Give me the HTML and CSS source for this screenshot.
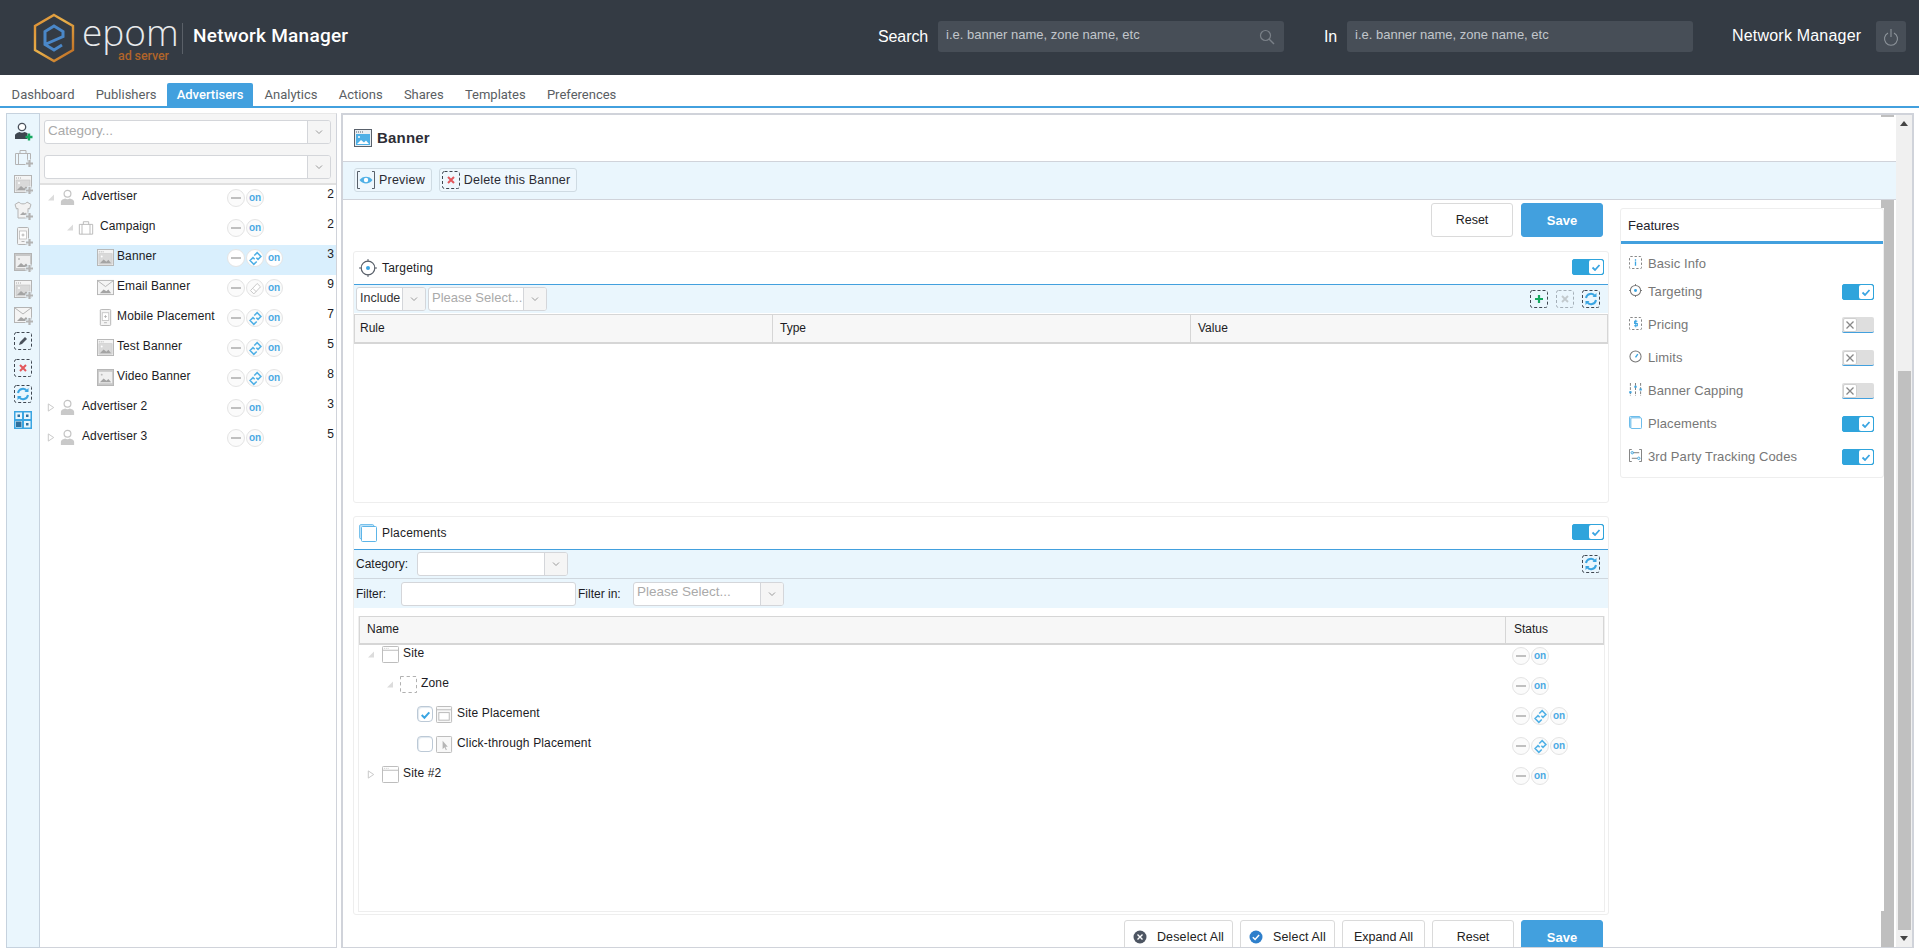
FILE: index.html
```html
<!DOCTYPE html>
<html lang="en">
<head>
<meta charset="utf-8">
<title>Epom Network Manager</title>
<link rel="stylesheet" href="styles.css">
</head>
<body>
<svg class="defs" width="0" height="0" aria-hidden="true">
  <defs>
    <linearGradient id="hexg" x1="0" y1="0" x2="1" y2="1">
      <stop offset="0" stop-color="#d98a32"/><stop offset=".45" stop-color="#e9b04a"/><stop offset="1" stop-color="#b9651f"/>
    </linearGradient>
    <symbol id="i-user" viewBox="0 0 18 18"><circle cx="9" cy="5" r="3.6" fill="#fff" stroke="#c4c4c4" stroke-width="1.3"/><path d="M2 17v-3.5c0-2 3-3 4.5-3.500 1.500 1 3.500 1 5 0 1.500.5 4.500 1.500 4.500 3.500V17z" fill="#c9c9c9"/></symbol>
    <symbol id="i-case" viewBox="0 0 18 18"><path d="M1.500 5.500h15v11h-15zM6 5.500V2.500h6v3M4.500 5.500v11M13.500 5.500v11" fill="none" stroke="#b4b4b4" stroke-width="1"/></symbol>
    <symbol id="i-banner" viewBox="0 0 18 18"><rect x=".5" y=".5" width="17" height="17" fill="#f4f4f4" stroke="#b4b4b4"/><rect x="2" y="5" width="14" height="11" fill="#d9d9d9" stroke="#c4c4c4" stroke-width=".6"/><path d="M2 3h1M4 3h1M6 3h1" stroke="#aaa"/><path d="M3 15l4-4 3 2.500 2-2 3 3.500z" fill="#a4a4a4"/><circle cx="5" cy="8" r="1" fill="#fff"/></symbol>
    <symbol id="i-mail" viewBox="0 0 18 18"><rect x=".5" y="1.500" width="17" height="15" fill="#f4f4f4" stroke="#b4b4b4"/><path d="M1 2l8 6 8-6" fill="none" stroke="#b4b4b4"/><path d="M3 15l4-4 3 2 2-2 3 4z" fill="#a4a4a4"/></symbol>
    <symbol id="i-mobile" viewBox="0 0 18 18"><rect x="3.500" y=".5" width="11" height="17" rx="1" fill="#f4f4f4" stroke="#b4b4b4"/><rect x="5.500" y="4" width="7" height="8" fill="#fff" stroke="#b4b4b4" stroke-width=".7"/><path d="M9 6.500v3M7.500 8h3" stroke="#aaa" stroke-width=".8"/><path d="M7.500 14.500h3" stroke="#b4b4b4"/></symbol>
    <symbol id="i-video" viewBox="0 0 18 18"><rect x=".5" y=".5" width="17" height="17" fill="#c8c8c8" stroke="#b4b4b4"/><rect x="2" y="3" width="14" height="12" fill="#efefef"/><path d="M3 14l4-4 3 2.500 2-2 3 3.500z" fill="#a4a4a4"/><circle cx="5" cy="6" r="1" fill="#bbb"/></symbol>
    <symbol id="i-shirt" viewBox="0 0 18 18"><path d="M5 1L1 3.500l1.500 4.500 1.500-.5V17h10V7.500l1.500.5L17 3.500 13 1c-1 2.500-7 2.500-8 0z" fill="#f2f2f2" stroke="#b4b4b4"/><path d="M6 14l3-3 2 1.500 1-1 1 2.500z" fill="#a8a8a8"/></symbol>
    <symbol id="i-plus" viewBox="0 0 20 20"><path d="M15.500 11.500v8M11.500 15.500h8" stroke="#eaf6fd" stroke-width="4"/><path d="M15.500 12v7M12 15.500h7" stroke="#b4b4b4" stroke-width="2.200"/></symbol>
    <symbol id="i-site" viewBox="0 0 18 18"><rect x=".5" y=".5" width="17" height="17" rx="1" fill="#fff" stroke="#b8b8b8"/><path d="M1 4.500h16" stroke="#b8b8b8"/><path d="M2 2.500h1M4 2.500h1M6 2.500h1" stroke="#c8c8c8"/></symbol>
    <symbol id="i-zone" viewBox="0 0 18 18"><rect x=".5" y=".5" width="17" height="17" fill="#fff" stroke="#aaa" stroke-dasharray="3.500 3"/></symbol>
    <symbol id="i-placement" viewBox="0 0 18 18"><rect x=".5" y=".5" width="16" height="17" rx="1" fill="#f8f8f8" stroke="#b8b8b8"/><path d="M1 4h15" stroke="#b8b8b8"/><rect x="3" y="7" width="11" height="8" fill="#fff" stroke="#b8b8b8"/></symbol>
    <symbol id="i-click" viewBox="0 0 18 18"><rect x=".5" y=".5" width="16" height="17" rx="1" fill="#f8f8f8" stroke="#b8b8b8"/><path d="M7 5v9l2-2 1.500 3 1-.5L10 11.500h2.500z" fill="#b5b5b5"/></symbol>
    <symbol id="i-link" viewBox="0 0 18 18"><path d="M7.500 5.500L11 2l4.500 4.500-3.500 3.500-2-2M10.500 12.500L7 16l-4.500-4.500L6 8l2 2" fill="none" stroke="#4fb0e6" stroke-width="1.800"/></symbol>
    <symbol id="i-linkoff" viewBox="0 0 18 18"><path d="M3 11.500L11 3l4 4-8 8.500zM6 9l4 4" fill="#fff" stroke="#c8c8c8" stroke-width="1.200"/></symbol>
    <symbol id="i-dash" viewBox="0 0 18 18"><rect x=".5" y=".5" width="17" height="17" rx="2" fill="none" stroke="#3e4650" stroke-dasharray="3 2"/></symbol>
    <symbol id="i-refresh" viewBox="0 0 18 18"><rect x=".5" y=".5" width="17" height="17" rx="2" fill="none" stroke="#3e4650" stroke-dasharray="3 2"/><path d="M4 8a5 5 0 0 1 9-2M14 10a5 5 0 0 1-9 2" fill="none" stroke="#3aa5e2" stroke-width="2"/><path d="M14.500 3v4h-4zM3.500 15v-4h4z" fill="#3aa5e2"/></symbol>
    <symbol id="i-x" viewBox="0 0 18 18"><rect x=".5" y=".5" width="17" height="17" rx="2" fill="none" stroke="#3e4650" stroke-dasharray="3 2"/><path d="M6 6l6 6M12 6l-6 6" stroke="#e2575c" stroke-width="2"/></symbol>
    <symbol id="i-edit" viewBox="0 0 18 18"><rect x=".5" y=".5" width="17" height="17" rx="2" fill="none" stroke="#3e4650" stroke-dasharray="3 2"/><path d="M5 13l1-3 5-5 2 2-5 5z" fill="#4b525c"/></symbol>
    <symbol id="i-grid" viewBox="0 0 18 18"><rect width="18" height="18" fill="#3aa5e2"/><path d="M1.500 1.500h6.500v6.500H1.500zM10 1.500h6.500v6.500H10zM1.500 10h6.500v6.500H1.500zM10 10h6.500v6.500H10z" fill="#e8f5fc"/><path d="M3.500 3.500h2.500v2.500H3.500zM12 3.500h2.500v2.500H12zM2 10.500h5.500V16H2zM12 12h2.500v2.500H12z" fill="#2e6f9c"/></symbol>
    <symbol id="i-target" viewBox="0 0 18 18"><circle cx="9" cy="9" r="6.800" fill="none" stroke="#5a616b" stroke-width="1.200"/><circle cx="9" cy="9" r="2" fill="#3aa5e2"/><path d="M9 0v3M9 15v3M0 9h3M15 9h3" stroke="#5a616b"/></symbol>
    <symbol id="i-places" viewBox="0 0 18 18"><rect x=".7" y=".7" width="14" height="14" rx="1" fill="#d5ecfa" stroke="#5db5e8"/><rect x="2.500" y="2.500" width="15" height="15" rx="1" fill="#fff" stroke="#5db5e8"/></symbol>
    <symbol id="i-f-info" viewBox="0 0 14 14"><rect x=".5" y=".5" width="13" height="13" rx="1" fill="none" stroke="#777" stroke-dasharray="2.500 2"/><path d="M7 3.500v1.500M7 6v4.500" stroke="#3aa5e2" stroke-width="1.400"/></symbol>
    <symbol id="i-f-target" viewBox="0 0 14 14"><circle cx="7" cy="7" r="5.500" fill="none" stroke="#777" stroke-width="1.100"/><circle cx="7" cy="7" r="1.600" fill="#3aa5e2"/><path d="M7 0v2M7 12v2M0 7h2M12 7h2" stroke="#777"/></symbol>
    <symbol id="i-f-price" viewBox="0 0 14 14"><rect x=".5" y=".5" width="13" height="13" rx="1" fill="none" stroke="#777" stroke-dasharray="2.500 2"/><path d="M9 4.500H6v2.500h3v2.500H5.500M7.300 3v8" fill="none" stroke="#3aa5e2" stroke-width="1.100"/></symbol>
    <symbol id="i-f-clock" viewBox="0 0 14 14"><circle cx="7" cy="7" r="6" fill="none" stroke="#777" stroke-width="1.100"/><path d="M7 8l2.500-3.500" stroke="#3aa5e2" stroke-width="1.500"/></symbol>
    <symbol id="i-f-cap" viewBox="0 0 14 14"><path d="M1.500 0v14M7 0v14M12.500 0v14" stroke="#777" stroke-dasharray="3 1.500"/><path d="M1.500 9v2M7 3v2M12.500 6v2" stroke="#3aa5e2" stroke-width="2.500"/></symbol>
    <symbol id="i-f-places" viewBox="0 0 14 14"><rect x=".5" y=".5" width="11.500" height="12" rx="1" fill="#cfe9f9" stroke="#5db5e8"/><rect x="2" y="2" width="11.500" height="11.500" rx="1" fill="#fff" stroke="#5db5e8"/></symbol>
    <symbol id="i-f-track" viewBox="0 0 14 14"><path d="M3 .5H.5v13H3M11 .5h2.500v13H11" fill="none" stroke="#777"/><path d="M4 4h7M3 10h6" stroke="#777"/><circle cx="3.500" cy="4" r="1.300" fill="none" stroke="#3aa5e2"/><circle cx="10.500" cy="10" r="1.300" fill="none" stroke="#3aa5e2"/></symbol>
    <symbol id="i-check" viewBox="0 0 12 12"><path d="M2.500 6.500l2.500 2.500 4.500-5" fill="none" stroke="#3aa5e2" stroke-width="1.800"/></symbol>
    <symbol id="i-off" viewBox="0 0 12 12"><path d="M2.500 2.500l7 7M9.500 2.500l-7 7" stroke="#888" stroke-width="1.300"/></symbol>
    <symbol id="i-chev" viewBox="0 0 10 6"><path d="M2 1.500l3 3 3-3" fill="none" stroke="#999" stroke-width="1"/></symbol>
    <symbol id="i-open" viewBox="0 0 8 8"><path d="M7 1v6H1z" fill="#dcdcdc"/></symbol>
    <symbol id="i-closed" viewBox="0 0 8 10"><path d="M1 1l6 4-6 4z" fill="#fff" stroke="#c4c4c4"/></symbol>
  </defs>
</svg>

<header class="topbar">
  <div class="brand">
    <svg class="hex" viewBox="0 0 44 50">
      <path d="M22 2l19 11v24L22 48 3 37V13z" fill="none" stroke="url(#hexg)" stroke-width="2.400"/>
      <path d="M30 32l-8 5-9-5.500v-13l9-5.500 9 5.500v5L14 31" fill="none" stroke="#4a87c8" stroke-width="3"/>
    </svg>
    <div class="wordmark"><span class="epom">epom</span><span class="adserver">ad server</span></div>
    <div class="brand-title">Network Manager</div>
  </div>
  <div class="searches">
    <label class="sr-label">Search</label>
    <div class="sr-box w-search"><span>i.e. banner name, zone name, etc</span>
      <svg class="sr-ico" viewBox="0 0 16 16"><circle cx="6.500" cy="6.500" r="5" fill="none" stroke="#7a8088" stroke-width="1.200"/><path d="M10 10l5 5" stroke="#7a8088" stroke-width="1.400"/></svg>
    </div>
    <label class="sr-label in">In</label>
    <div class="sr-box"><span>i.e. banner name, zone name, etc</span></div>
    <div class="sr-label nm">Network Manager</div>
    <div class="power"><svg viewBox="0 0 16 20" width="16" height="20"><path d="M5 6a6.500 6.500 0 1 0 6 0M8 2v8" fill="none" stroke="#8d949b" stroke-width="1.100"/></svg></div>
  </div>
</header>

<nav class="tabs">
  <a class="tab">Dashboard</a><a class="tab">Publishers</a><a class="tab active">Advertisers</a><a class="tab">Analytics</a><a class="tab">Actions</a><a class="tab">Shares</a><a class="tab">Templates</a><a class="tab">Preferences</a>
</nav>

<div class="workspace">
  <aside class="tools">
    <svg class="t-ico" viewBox="0 0 20 20"><circle cx="8" cy="5" r="3.700" fill="#fff" stroke="#4b525c" stroke-width="1.300"/><path d="M1 17v-3.500c0-2 3-3 4.500-3.500 1.500 1 3.500 1 5 0 1 .3 2 .7 3 1.300V17z" fill="#3e4650"/><path d="M15 11.500v7M11.500 15h7" stroke="#16a860" stroke-width="2.400"/></svg>
    <svg class="t-ico" viewBox="0 0 20 20"><use href="#i-case" width="18" height="18"/><use href="#i-plus"/></svg>
    <svg class="t-ico" viewBox="0 0 20 20"><use href="#i-banner" width="18" height="18"/><use href="#i-plus"/></svg>
    <svg class="t-ico" viewBox="0 0 20 20"><use href="#i-shirt" width="18" height="18"/><use href="#i-plus"/></svg>
    <svg class="t-ico" viewBox="0 0 20 20"><use href="#i-mobile" width="18" height="18"/><use href="#i-plus"/></svg>
    <svg class="t-ico" viewBox="0 0 20 20"><use href="#i-video" width="18" height="18"/><use href="#i-plus"/></svg>
    <svg class="t-ico" viewBox="0 0 20 20"><use href="#i-banner" width="18" height="18"/><use href="#i-plus"/></svg>
    <svg class="t-ico" viewBox="0 0 20 20"><use href="#i-mail" width="18" height="18"/><use href="#i-plus"/></svg>
    <svg class="t-ico" viewBox="0 0 20 20"><use href="#i-edit" width="18" height="18"/></svg>
    <svg class="t-ico" viewBox="0 0 20 20"><use href="#i-x" width="18" height="18"/></svg>
    <svg class="t-ico" viewBox="0 0 20 20"><use href="#i-refresh" width="18" height="18"/></svg>
    <svg class="t-ico" viewBox="0 0 20 20"><use href="#i-grid" width="18" height="18"/></svg>
  </aside>

  <section class="treepanel">
    <div class="filters">
      <div class="combo wide"><span class="ph">Category...</span><b class="chev"><svg viewBox="0 0 10 6"><use href="#i-chev"/></svg></b></div>
      <div class="combo wide"><span class="ph"></span><b class="chev"><svg viewBox="0 0 10 6"><use href="#i-chev"/></svg></b></div>
    </div>
    <div class="tree">
      <div class="row lv0"><svg class="arrow"><use href="#i-open"/></svg><svg class="nico"><use href="#i-user"/></svg><span class="lbl">Advertiser</span><div class="ctrls"><i class="cb minus"></i><i class="cb on">on</i></div><span class="num">2</span></div>
      <div class="row lv1"><svg class="arrow"><use href="#i-open"/></svg><svg class="nico"><use href="#i-case"/></svg><span class="lbl">Campaign</span><div class="ctrls"><i class="cb minus"></i><i class="cb on">on</i></div><span class="num">2</span></div>
      <div class="row lv2 sel"><svg class="nico"><use href="#i-banner"/></svg><span class="lbl">Banner</span><div class="ctrls"><i class="cb minus"></i><i class="cb"><svg><use href="#i-link"/></svg></i><i class="cb on">on</i></div><span class="num">3</span></div>
      <div class="row lv2"><svg class="nico"><use href="#i-mail"/></svg><span class="lbl">Email Banner</span><div class="ctrls"><i class="cb minus"></i><i class="cb"><svg><use href="#i-linkoff"/></svg></i><i class="cb on">on</i></div><span class="num">9</span></div>
      <div class="row lv2"><svg class="nico"><use href="#i-mobile"/></svg><span class="lbl sp">Mobile Placement</span><div class="ctrls"><i class="cb minus"></i><i class="cb"><svg><use href="#i-link"/></svg></i><i class="cb on">on</i></div><span class="num">7</span></div>
      <div class="row lv2"><svg class="nico"><use href="#i-banner"/></svg><span class="lbl">Test Banner</span><div class="ctrls"><i class="cb minus"></i><i class="cb"><svg><use href="#i-link"/></svg></i><i class="cb on">on</i></div><span class="num">5</span></div>
      <div class="row lv2"><svg class="nico"><use href="#i-video"/></svg><span class="lbl">Video Banner</span><div class="ctrls"><i class="cb minus"></i><i class="cb"><svg><use href="#i-link"/></svg></i><i class="cb on">on</i></div><span class="num">8</span></div>
      <div class="row lv0"><svg class="arrow"><use href="#i-closed"/></svg><svg class="nico"><use href="#i-user"/></svg><span class="lbl">Advertiser 2</span><div class="ctrls"><i class="cb minus"></i><i class="cb on">on</i></div><span class="num">3</span></div>
      <div class="row lv0"><svg class="arrow"><use href="#i-closed"/></svg><svg class="nico"><use href="#i-user"/></svg><span class="lbl">Advertiser 3</span><div class="ctrls"><i class="cb minus"></i><i class="cb on">on</i></div><span class="num">5</span></div>
    </div>
  </section>

  <main class="mainpanel">
    <div class="content">
      <div class="titlebar">
        <svg class="title-ico" viewBox="0 0 18 18"><rect x=".5" y=".5" width="17" height="17" fill="#e9eef2" stroke="#59616b"/><rect x="2" y="5" width="14" height="11" fill="#4fb0e6"/><path d="M3 15l4-4 3 2.500 2-2 3 3.500z" fill="#fff"/><circle cx="5" cy="8" r="1" fill="#fff"/><path d="M2 3h8" stroke="#59616b" stroke-dasharray="1 1"/></svg>
        <h1>Banner</h1>
      </div>
      <div class="actionbar">
        <button class="act"><svg viewBox="0 0 18 18"><path d="M3 .5H.5v17H3M15 .5h2.500v17H15" fill="none" stroke="#59616b"/><path d="M2.500 9c3-4.500 10-4.500 13 0-3 4.500-10 4.500-13 0z" fill="#4fb0e6"/><circle cx="9" cy="9" r="2.200" fill="#fff"/></svg>Preview</button>
        <button class="act"><svg viewBox="0 0 18 18"><use href="#i-x"/></svg>Delete this Banner</button>
      </div>
      <div class="bodyrow">
        <div class="leftcol">
          <div class="btnrow top">
            <button class="btn">Reset</button><button class="btn save">Save</button>
          </div>

          <section class="card targeting">
            <div class="card-head">
              <svg class="head-ico" viewBox="0 0 18 18"><use href="#i-target"/></svg><span>Targeting</span>
              <span class="toggle onstate"><b></b><em><svg viewBox="0 0 12 12"><use href="#i-check"/></svg></em></span>
            </div>
            <div class="strip">
              <div class="combo small inc"><span>Include</span><b class="chev"><svg viewBox="0 0 10 6"><use href="#i-chev"/></svg></b></div>
              <div class="combo small sel2"><span class="ph">Please Select...</span><b class="chev"><svg viewBox="0 0 10 6"><use href="#i-chev"/></svg></b></div>
              <div class="strip-right">
                <svg class="sicon" viewBox="0 0 18 18"><use href="#i-dash"/><path d="M9 5v8M5 9h8" stroke="#16a860" stroke-width="2.200"/></svg>
                <svg class="sicon dim" viewBox="0 0 18 18"><use href="#i-dash"/><path d="M6 6l6 6M12 6l-6 6" stroke="#888" stroke-width="1.800"/></svg>
                <svg class="sicon" viewBox="0 0 18 18"><use href="#i-refresh"/></svg>
              </div>
            </div>
            <div class="thead three"><span>Rule</span><span>Type</span><span>Value</span></div>
          </section>

          <section class="card placements">
            <div class="card-head">
              <svg class="head-ico" viewBox="0 0 18 18"><use href="#i-places"/></svg><span>Placements</span>
              <span class="toggle onstate"><b></b><em><svg viewBox="0 0 12 12"><use href="#i-check"/></svg></em></span>
            </div>
            <div class="strip firststrip">
              <label class="cat-l">Category:</label>
              <div class="combo small cat"><span></span><b class="chev"><svg viewBox="0 0 10 6"><use href="#i-chev"/></svg></b></div>
              <div class="strip-right"><svg class="sicon" viewBox="0 0 18 18"><use href="#i-refresh"/></svg></div>
            </div>
            <div class="strip second">
              <label class="fil-l">Filter:</label>
              <div class="plain"></div>
              <label class="fin-l">Filter in:</label>
              <div class="combo small cat"><span class="ph">Please Select...</span><b class="chev"><svg viewBox="0 0 10 6"><use href="#i-chev"/></svg></b></div>
            </div>
            <div class="ptable">
              <div class="thead two"><span>Name</span><span>Status</span></div>
              <div class="prow p0"><svg class="arrow"><use href="#i-open"/></svg><svg class="nico"><use href="#i-site"/></svg><span class="lbl">Site</span><div class="ctrls"><i class="cb minus"></i><i class="cb on">on</i></div></div>
              <div class="prow p1"><svg class="arrow"><use href="#i-open"/></svg><svg class="nico"><use href="#i-zone"/></svg><span class="lbl">Zone</span><div class="ctrls"><i class="cb minus"></i><i class="cb on">on</i></div></div>
              <div class="prow p2"><span class="check ticked"><svg viewBox="0 0 12 12"><use href="#i-check"/></svg></span><svg class="nico"><use href="#i-placement"/></svg><span class="lbl">Site Placement</span><div class="ctrls"><i class="cb minus"></i><i class="cb"><svg><use href="#i-link"/></svg></i><i class="cb on">on</i></div></div>
              <div class="prow p2"><span class="check"></span><svg class="nico"><use href="#i-click"/></svg><span class="lbl">Click-through Placement</span><div class="ctrls"><i class="cb minus"></i><i class="cb"><svg><use href="#i-link"/></svg></i><i class="cb on">on</i></div></div>
              <div class="prow p0"><svg class="arrow"><use href="#i-closed"/></svg><svg class="nico"><use href="#i-site"/></svg><span class="lbl">Site #2</span><div class="ctrls"><i class="cb minus"></i><i class="cb on">on</i></div></div>
            </div>
          </section>

          <div class="btnrow bottom">
            <button class="btn ic"><svg viewBox="0 0 14 14"><circle cx="7" cy="7" r="6.500" fill="#4d5562"/><path d="M4.500 4.500l5 5M9.500 4.500l-5 5" stroke="#fff" stroke-width="1.400"/></svg>Deselect All</button>
            <button class="btn ic"><svg viewBox="0 0 14 14"><circle cx="7" cy="7" r="6.500" fill="#2e7fcb"/><path d="M3.800 7.200l2.300 2.300 4-4.500" fill="none" stroke="#fff" stroke-width="1.500"/></svg>Select All</button>
            <button class="btn expand">Expand All</button>
            <button class="btn">Reset</button>
            <button class="btn save">Save</button>
          </div>
        </div>

        <aside class="features">
          <div class="f-head">Features</div>
          <div class="f-row first"><svg viewBox="0 0 14 14"><use href="#i-f-info"/></svg><span>Basic Info</span></div>
          <div class="f-row"><svg viewBox="0 0 14 14"><use href="#i-f-target"/></svg><span>Targeting</span><span class="toggle onstate"><b></b><em><svg viewBox="0 0 12 12"><use href="#i-check"/></svg></em></span></div>
          <div class="f-row"><svg viewBox="0 0 14 14"><use href="#i-f-price"/></svg><span>Pricing</span><span class="toggle offstate"><em><svg viewBox="0 0 12 12"><use href="#i-off"/></svg></em><b></b></span></div>
          <div class="f-row"><svg viewBox="0 0 14 14"><use href="#i-f-clock"/></svg><span>Limits</span><span class="toggle offstate"><em><svg viewBox="0 0 12 12"><use href="#i-off"/></svg></em><b></b></span></div>
          <div class="f-row"><svg viewBox="0 0 14 14"><use href="#i-f-cap"/></svg><span>Banner Capping</span><span class="toggle offstate"><em><svg viewBox="0 0 12 12"><use href="#i-off"/></svg></em><b></b></span></div>
          <div class="f-row"><svg viewBox="0 0 14 14"><use href="#i-f-places"/></svg><span>Placements</span><span class="toggle onstate"><b></b><em><svg viewBox="0 0 12 12"><use href="#i-check"/></svg></em></span></div>
          <div class="f-row"><svg viewBox="0 0 14 14"><use href="#i-f-track"/></svg><span>3rd Party Tracking Codes</span><span class="toggle onstate"><b></b><em><svg viewBox="0 0 12 12"><use href="#i-check"/></svg></em></span></div>
        </aside>

        <div class="inner-scroll"><div class="inner-thumb"></div></div>
      </div>
    </div>
    <div class="outer-scroll">
      <svg class="sb-arrow up" viewBox="0 0 8 5"><path d="M4 0l4 5H0z"/></svg>
      <div class="outer-thumb"></div>
      <svg class="sb-arrow" viewBox="0 0 8 5"><path d="M4 5L0 0h8z"/></svg>
    </div>
  </main>
</div>
</body>
</html>
```

FILE: styles.css
```css
* { box-sizing: border-box; }
html, body { margin: 0; height: 950px; overflow: hidden; background: #fff; }
body { font: 12px "Liberation Sans", Arial, sans-serif; color: #1c1c24; display: flex; flex-direction: column; }
.defs { position: absolute; }

.topbar { height: 75px; flex: none; background: #343b44; display: flex; align-items: flex-start; position: relative; }
.brand { display: flex; align-items: flex-start; padding-left: 32px; width: 878px; }
.hex { width: 44px; height: 50px; margin-top: 13px; flex: none; }
.wordmark { width: 103px; margin-left: 4px; border-right: 1px solid #5a6068; position: relative; height: 31px; margin-top: 23px; }
.epom { position: absolute; left: 2px; top: -3px; font: 300 37px/24px "Open Sans", sans-serif; color: #e8eaec; letter-spacing: 0; }
.adserver { position: absolute; left: 38px; top: 26px; font: 500 12.500px/14px "Roboto", sans-serif; color: #b0642a; white-space: nowrap; letter-spacing: -.1px; }
.brand-title { margin: 23px 0 0 10px; font: 500 19px/26px "Roboto", sans-serif; letter-spacing: .25px; color: #fff; white-space: nowrap; }

.searches { display: flex; align-items: flex-start; padding-top: 21px; }
.sr-label { font-size: 16px; line-height: 32px; color: #fff; width: 60px; flex: none; white-space: nowrap; letter-spacing: -.1px; }
.sr-label.in { margin-left: 40px; width: 23px; }
.sr-label.nm { margin-left: 39px; width: 144px; letter-spacing: .2px; line-height: 30px; }
.sr-box { width: 346px; height: 31px; border-radius: 3px; background: #474e57; padding: 7px 7px 0 8px; color: #c2c6cb; font-size: 13px; line-height: 14px; position: relative; }
.sr-ico { position: absolute; right: 9px; top: 8px; width: 16px; height: 16px; }
.power { width: 30px; height: 31px; background: #474e57; border-radius: 3px; display: flex; align-items: center; justify-content: center; }

.tabs { height: 33px; flex: none; display: flex; padding: 8px 0 0 1px; border-bottom: 2px solid #42a0de; }
.tab { font: 13px/24px "Roboto", sans-serif; color: #5a5e63; padding: 0 10.600px; height: 23px; white-space: nowrap; }
.tab.active { background: #42a0de; color: #fff; padding: 0 9.500px; font-weight: 500; margin: 0 1px 0 0; border-radius: 2px 2px 0 0; }

.workspace { flex: 1; min-height: 0; display: flex; padding: 5px 5px 2px 6px; }

.tools { width: 34px; flex: none; background: #eaf6fd; border: 1px solid #c6d2de; display: flex; flex-direction: column; align-items: center; padding: 8px 0 0 2px; }
.t-ico { width: 20px; height: 20px; margin-bottom: 6.300px; flex: none; }

.treepanel { width: 297px; flex: none; border: 1px solid #d0d3da; border-left: 0; border-top-color: #e8e8e8; display: flex; flex-direction: column; background: #fff; }
.filters { height: 71px; flex: none; background: #f5f5f5; border-bottom: 2px solid #e0e0e0; padding: 6px 4px 0; display: flex; flex-direction: column; gap: 11px; }
.combo { display: flex; height: 24px; background: #fff; border: 1px solid #d4d6da; border-radius: 3px; font-size: 12.500px; line-height: 20px; color: #333; overflow: hidden; }
.combo > span { flex: 1; padding-left: 3px; white-space: nowrap; overflow: hidden; min-width: 0; }
.combo.wide { width: 287px; font-size: 13px; }
.combo.wide .ph { line-height: 20px; }
.ph { color: #aaa; font-size: 13.500px; }
.chev { width: 23px; flex: none; background: #f5f5f5; border-left: 1px solid #d4d6da; display: flex; align-items: center; justify-content: center; }
.chev svg { width: 10px; height: 6px; }

.row { height: 30px; display: flex; align-items: flex-start; padding-top: 4px; position: relative; }
.row.sel { background: #d9effd; }
.row.lv0 { padding-left: 7px; }
.row.lv1 { padding-left: 26px; }
.row.lv2 { padding-left: 57px; }
.arrow { width: 8px; height: 9px; margin: 4px 4px 0 0; flex: none; }
.nico { width: 17px; height: 17px; flex: none; }
.row .lbl { margin-left: 3px; line-height: 14px; flex: 1; min-width: 0; white-space: nowrap; letter-spacing: .1px; }
.lv0 .lbl { margin-left: 6px; }
.lv1 .nico { width: 16px; }
.lv1 .lbl { margin-left: 6px; }
.row .lbl.sp { letter-spacing: .15px; }
.ctrls { display: flex; gap: 1px; flex: none; }
.row .ctrls { width: 93px; }
.num { width: 14px; flex: none; text-align: right; margin: -2px 2px 0 0; line-height: 14px; font-size: 12px; }
.cb { width: 18px; height: 18px; border-radius: 50%; border: 1px solid #e4e4e4; background: #fbfbfb; display: flex; align-items: center; justify-content: center; font: 700 10px/12px "Liberation Sans", sans-serif; color: #4aa9e3; flex: none; position: relative; }
.cb svg { width: 15px; height: 15px; }
.cb.minus::before { content: ""; width: 10px; height: 2px; background: #c0c0c0; }
.sel .cb { background: #fff; }

.mainpanel { flex: 1; min-width: 0; margin-left: 4px; border: 2px solid #d0d3da; border-bottom-width: 1px; display: flex; overflow: hidden; }
.content { flex: 1; min-width: 0; display: flex; flex-direction: column; position: relative; }
.content::after { content: ""; position: absolute; top: 0; right: 2px; width: 13px; height: 2px; background: #bfbfbf; }
.titlebar { height: 47px; flex: none; display: flex; align-items: center; padding-left: 11px; border-bottom: 1px solid #d0d3da; padding-bottom: 1px; }
.title-ico { width: 18px; height: 18px; }
.titlebar h1 { margin: 0 0 0 5px; font-size: 15px; font-weight: 700; letter-spacing: .2px; color: #2e2e36; }
.actionbar { height: 38px; flex: none; background: #eaf6fd; border-bottom: 1px solid #d0d3da; display: flex; align-items: center; gap: 7px; padding-left: 11px; padding-bottom: 1px; }
.act { height: 24px; padding: 0 6px 0 2px; border: 1px solid #cfdbe3; border-radius: 3px; background: #eef7fd; display: flex; align-items: center; gap: 4px; font: 12.500px "Liberation Sans", sans-serif; letter-spacing: .2px; color: #2b2b33; }
.act svg { width: 18px; height: 18px; }

.bodyrow { flex: 1; min-height: 0; display: flex; }
.leftcol { width: 1266px; flex: none; padding-left: 10px; }
.btnrow { display: flex; justify-content: flex-end; gap: 8px; }
.btnrow.top { height: 51px; padding: 3px 6px 0 0; }
.btn { height: 34px; width: 82px; border: 1px solid #dadada; border-radius: 3px; background: #fff; font: 12.500px "Liberation Sans", sans-serif; color: #222; padding: 0; flex: none; }
.btn.save { background: #42a0de; border-color: #42a0de; color: #fff; font-weight: 700; font-size: 13px; }
.btn.ic { display: flex; align-items: center; justify-content: center; gap: 10px; width: 109px; letter-spacing: .15px; }
.btn.ic + .btn.ic { width: 95px; }
.btn.ic svg { width: 14px; height: 14px; }
.btn.expand { width: 83px; }
.btnrow.bottom { padding: 5px 6px 0 0; gap: 7px; }

.card { width: 1256px; border: 1px solid #eeeeee; border-radius: 3px; background: #fff; }
.targeting { height: 252px; margin-bottom: 13px; }
.placements { height: 399px; }
.card-head { height: 33px; display: flex; align-items: center; padding: 0 4px 0 5px; border-bottom: 1px solid #42a0de; position: relative; letter-spacing: .2px; }
.head-ico { width: 18px; height: 18px; margin: 0 5px 0 0; }
.card-head .toggle { margin-left: auto; margin-top: -3px; }
.toggle { display: flex; width: 32px; height: 16px; border-radius: 2px; overflow: hidden; flex: none; }
.toggle b { display: block; }
.toggle em { display: flex; align-items: center; justify-content: center; background: #fff; width: 14px; height: 14px; margin: 0; border-radius: 2px; }
.toggle em svg { width: 12px; height: 12px; }
.onstate { background: #2fa4dc; border: 1px solid #2fa4dc; }
.onstate b { flex: 1; }
.offstate { background: #dedede; border-bottom: 1px solid #42a0de; }
.offstate b { flex: 1; }
.offstate em { margin: 1px 1px 0; border: 1px solid #d0d0d0; }

.strip { height: 28px; background: #eaf6fd; display: flex; align-items: center; padding-left: 2px; gap: 1px; position: relative; }
.strip-right { margin-left: auto; display: flex; gap: 8px; padding-right: 8px; }
.sicon { width: 18px; height: 18px; }
.sicon.dim { opacity: .4; }
.combo.small .chev { width: 23px; }
.inc { width: 70px; }
.sel2 { width: 119px; margin-left: 1px; }
.sel2 .ph { font-size: 13px; }

.thead { height: 29px; background: #f7f7f7; border: 1px solid #d6d6d6; border-width: 1px 1px 2px; display: grid; align-items: center; }
.thead span { padding-left: 7px; height: 100%; line-height: 25px; border-left: 1px solid #d6d6d6; }
.thead span:first-child { border-left: 0; }
.thead.three { grid-template-columns: 417px 418px 1fr; height: 30px; margin-top: 1px; }
.thead.three span { line-height: 26px; }
.thead.three span:first-child { padding-left: 5px; }
.thead.two { grid-template-columns: 1145px 1fr; margin-bottom: -3px; }
.thead.two span + span { padding-left: 8px; }

.firststrip { border-bottom: 1px solid #cfd7de; height: 29px; }
.second { height: 29px; padding-left: 2px; margin-bottom: 8px; }
.cat-l { width: 60px; flex: none; }
.combo.cat { width: 151px; }
.combo.cat > span { padding-left: 3px; line-height: 18px; }
.fil-l { width: 44px; flex: none; }
.plain { width: 175px; height: 24px; background: #fff; border: 1px solid #d4d6da; border-radius: 3px; }
.fin-l { margin-left: 1px; width: 54px; flex: none; }

.ptable { margin: 0 3px 0 4px; height: 296px; border: 1px solid #eeeeee; border-top: 0; }
.prow { height: 30px; display: flex; align-items: flex-start; padding-top: 4px; position: relative; }
.prow.p0 { padding-left: 8px; }
.prow.p1 { padding-left: 27px; }
.prow.p2 { padding-left: 58px; }
.prow .lbl { margin-left: 4px; line-height: 14px; flex: 1; white-space: nowrap; letter-spacing: .15px; }
.prow .ctrls { width: 96px; margin-top: 1px; padding-left: 4px; }
.prow.p0 .arrow { margin-right: 7px; }
.prow.p1 .arrow { margin-right: 6px; }
.check { width: 16px; height: 16px; margin-right: 3px; flex: none; border: 1px solid #bcc9d6; border-radius: 4px; background: #fff; display: flex; align-items: center; justify-content: center; box-shadow: inset 1px 1px 1px #e0e8ef; }
.check svg { width: 13px; height: 13px; }

.features { width: 264px; height: 270px; margin: 8px 0 0 11px; flex: none; border: 1px solid #eeeeee; border-radius: 3px; background: #fff; position: relative; z-index: 1; }
.f-head { height: 35px; font-size: 13px; line-height: 34px; padding-left: 7px; border-bottom: 3px solid #42a0de; color: #23232b; }
.f-row { height: 33px; display: flex; align-items: flex-start; padding: 5px 9px 0 8px; color: #777; font-size: 13px; letter-spacing: .1px; }
.f-row.first { height: 35px; padding-top: 12px; }
.f-row > svg { width: 13px; height: 13px; margin: 0 6px 0 0; flex: none; }
.f-row > span:nth-of-type(1) { line-height: 14px; margin-top: 1px; }
.f-row .toggle { margin-left: auto; }

.inner-scroll { flex: 1; display: flex; padding-left: 0; }
.inner-thumb { width: 10px; background: #bfbfbf; height: 100%; position: relative; }
.inner-thumb::before, .inner-thumb::after { content: ""; position: absolute; left: -3px; width: 3px; background: #bfbfbf; }
.inner-thumb::before { top: 0; height: 8px; }
.inner-thumb::after { bottom: 0; height: 36px; }

.outer-scroll { width: 16px; flex: none; background: #f0f0f0; display: flex; flex-direction: column; align-items: center; }
.sb-arrow { width: 8px; height: 5px; fill: #444; margin: 6px 0; flex: none; }
.sb-arrow.up { margin-bottom: 245px; }
.outer-thumb { width: 13px; flex: 1; background: #c0c0c0; }
```
